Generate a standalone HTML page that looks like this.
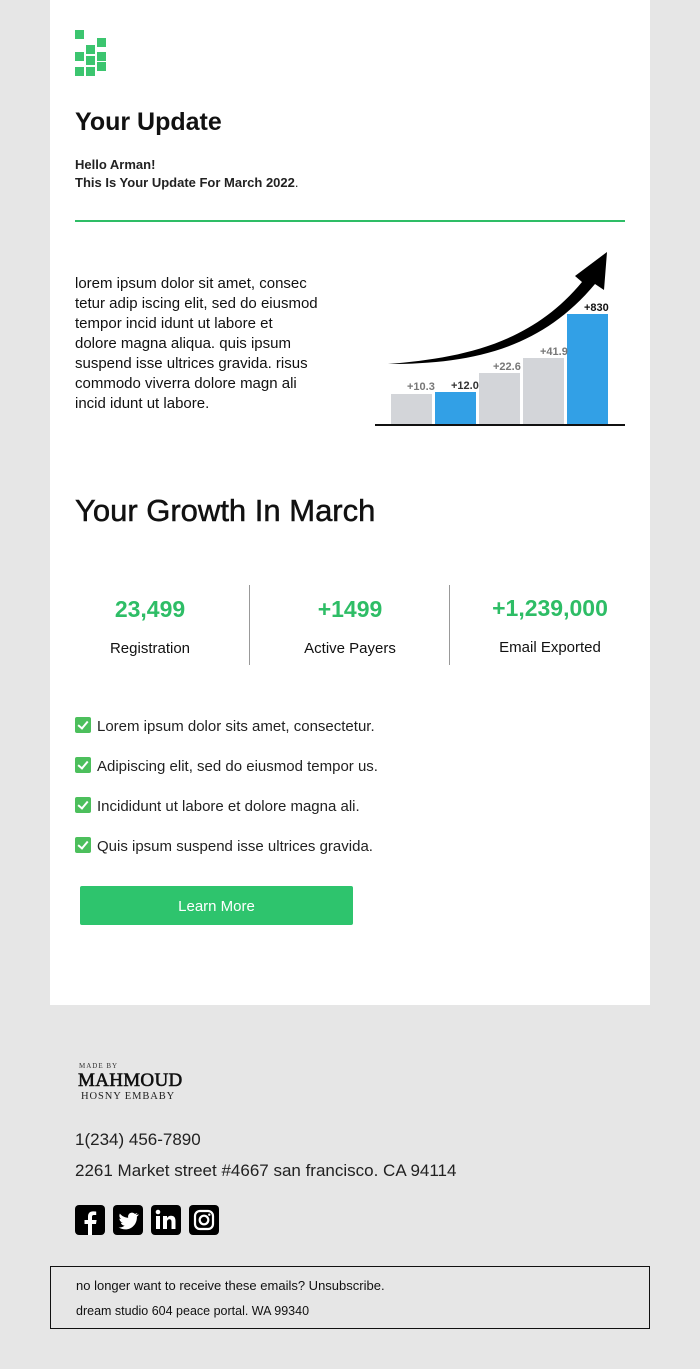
<!DOCTYPE html>
<html><head><meta charset="utf-8"><style>
*{margin:0;padding:0;box-sizing:border-box}
body{width:700px;height:1369px;background:#e6e6e6;font-family:"Liberation Sans",sans-serif;color:#111;position:relative;overflow:hidden}
.card{position:absolute;left:50px;top:0;width:600px;height:1005px;background:#fff}
.a{position:absolute;white-space:nowrap}
.sq{position:absolute;width:9px;height:9px;background:#3cc56f}
.chk{display:inline-block;width:16px;height:16px;background:#4cbf5c;border-radius:2px;vertical-align:-2px;margin-right:6px;position:relative}
.chk:after{content:"";position:absolute;left:5px;top:2px;width:4px;height:8px;border:solid #fff;border-width:0 2.5px 2.5px 0;transform:rotate(40deg)}
.li{font-size:15px;color:#222}
.num{font-size:23px;font-weight:bold;color:#2ebd66;text-align:center;width:200px}
.lab{font-size:15px;text-align:center;width:200px}
.soc{position:absolute;top:1205px;width:30px;height:30px;background:#000;border-radius:4px}
</style></head><body>
<div class="card"></div>
<div class="sq" style="left:75px;top:30px"></div>
<div class="sq" style="left:97px;top:38px"></div>
<div class="sq" style="left:86px;top:45px"></div>
<div class="sq" style="left:75px;top:52px"></div>
<div class="sq" style="left:97px;top:52px"></div>
<div class="sq" style="left:86px;top:56px"></div>
<div class="sq" style="left:97px;top:62px"></div>
<div class="sq" style="left:75px;top:67px"></div>
<div class="sq" style="left:86px;top:67px"></div>

<div class="a" style="left:75px;top:108px;font-size:25px;font-weight:bold;color:#111">Your Update</div>
<div class="a" style="left:75px;top:156px;font-size:13px;font-weight:bold;line-height:18px;color:#222">Hello Arman!<br>This Is Your Update For March 2022<span style="font-weight:normal">.</span></div>
<div class="a" style="left:75px;top:220px;width:550px;height:2px;background:#2ebd66"></div>

<div class="a" style="left:75px;top:274px;font-size:15px;line-height:20px;color:#111">lorem ipsum dolor sit amet, consec<br>tetur adip iscing elit, sed do eiusmod<br>tempor incid idunt ut labore et<br>dolore magna aliqua. quis ipsum<br>suspend isse ultrices gravida. risus<br>commodo viverra dolore magn ali<br>incid idunt ut labore.</div>

<svg class="a" style="left:370px;top:240px" width="260" height="195" viewBox="0 0 260 195">
<rect x="21" y="154" width="41" height="31" fill="#d3d5d9"/>
<rect x="65" y="152" width="41" height="33" fill="#32a0e6"/>
<rect x="109" y="133" width="41" height="52" fill="#d3d5d9"/>
<rect x="153" y="118" width="41" height="67" fill="#d3d5d9"/>
<rect x="197" y="74" width="41" height="111" fill="#32a0e6"/>
<rect x="5" y="184" width="250" height="2" fill="#111"/>
<g font-family="Liberation Sans Narrow,Liberation Sans,sans-serif" font-weight="bold" font-size="11">
<text x="37" y="150" fill="#777">+10.3</text>
<text x="81" y="149" fill="#333">+12.0</text>
<text x="123" y="130" fill="#777">+22.6</text>
<text x="170" y="115" fill="#777">+41.9</text>
<text x="214" y="71" fill="#111">+830</text></g>
<path d="M18 124 C90 118 160 105 212 42 L205 36 L237 12 L234 50 L225 44 C170 110 100 124 18 124 Z" fill="#000"/>
</svg>

<div class="a" style="left:75px;top:493px;font-size:31px;color:#111;-webkit-text-stroke:0.5px #111">Your Growth In March</div>

<div class="a num" style="left:50px;top:596px">23,499</div>
<div class="a lab" style="left:50px;top:640px">Registration</div>
<div class="a" style="left:249px;top:585px;width:1px;height:80px;background:#999"></div>
<div class="a num" style="left:250px;top:596px">+1499</div>
<div class="a lab" style="left:250px;top:640px">Active Payers</div>
<div class="a" style="left:449px;top:585px;width:1px;height:80px;background:#999"></div>
<div class="a num" style="left:450px;top:595px">+1,239,000</div>
<div class="a lab" style="left:450px;top:639px">Email Exported</div>

<div class="a li" style="left:75px;top:717px"><span class="chk"></span>Lorem ipsum dolor sits amet, consectetur.</div>
<div class="a li" style="left:75px;top:757px"><span class="chk"></span>Adipiscing elit, sed do eiusmod tempor us.</div>
<div class="a li" style="left:75px;top:797px"><span class="chk"></span>Incididunt ut labore et dolore magna ali.</div>
<div class="a li" style="left:75px;top:837px"><span class="chk"></span>Quis ipsum suspend isse ultrices gravida.</div>

<div class="a" style="left:80px;top:886px;width:273px;height:39px;background:#2ec46d;border-radius:2px;color:#fff;font-size:15px;text-align:center;line-height:41px">Learn More</div>

<div class="a" style="left:79px;top:1062px;font-family:'Liberation Serif',serif;font-size:7px;letter-spacing:1px;color:#333">MADE BY</div>
<div class="a" style="left:78px;top:1070px;font-family:'Liberation Serif',serif;font-size:19px;color:#111;-webkit-text-stroke:0.6px #111;letter-spacing:0.3px">MAHMOUD</div>
<div class="a" style="left:81px;top:1091px;font-family:'Liberation Serif',serif;font-size:10.5px;letter-spacing:.9px;color:#222">HOSNY EMBABY</div>

<div class="a" style="left:75px;top:1130px;font-size:17px;color:#222">1(234) 456-7890</div>
<div class="a" style="left:75px;top:1161px;font-size:17px;color:#222">2261 Market street #4667 san francisco. CA 94114</div>

<div class="soc" style="left:75px"><svg width="30" height="30"><path d="M17 30V19h4l.6-4H17v-3c0-1.2.4-2 2-2h2.2V6.6c-.4 0-1.7-.2-3.2-.2-3.2 0-5 1.9-5 5.3V15H9.5v4H13v11z" fill="#fff"/></svg></div>
<div class="soc" style="left:113px"><svg width="30" height="30"><path d="M25 9.5c-.7.3-1.5.5-2.3.6.8-.5 1.4-1.3 1.7-2.2-.8.5-1.6.8-2.5 1-1.6-1.7-4.4-1.7-5.9.1-.9 1-1.1 2.5-.8 3.8-3.3-.2-6.3-1.7-8.3-4.2-1.1 1.9-.5 4.2 1.3 5.4-.6 0-1.3-.2-1.800-.5 0 2 1.4 3.7 3.3 4.1-.6.2-1.2.2-1.9.1.5 1.7 2.1 2.8 3.9 2.9-1.7 1.4-4 2-6.1 1.8 8.7 5.4 18.8-.8 18.3-10.9.8-.5 1.4-1.2 1.9-2z" fill="#fff"/></svg></div>
<div class="soc" style="left:151px"><svg width="30" height="30"><rect x="5" y="11" width="4" height="13" fill="#fff"/><circle cx="7" cy="7" r="2.3" fill="#fff"/><path d="M12 11h4v2c.8-1.4 2.2-2.3 4-2.3 3.2 0 4.5 2 4.5 5.3V24h-4v-7c0-1.7-.5-2.8-2-2.8s-2.5 1.1-2.5 2.8v7h-4z" fill="#fff"/></svg></div>
<div class="soc" style="left:189px"><svg width="30" height="30"><rect x="6" y="6" width="18" height="18" rx="5" fill="none" stroke="#fff" stroke-width="2.2"/><circle cx="15" cy="15" r="4.3" fill="none" stroke="#fff" stroke-width="2.2"/><circle cx="20.3" cy="9.7" r="1.2" fill="#fff"/></svg></div>

<div class="a" style="left:50px;top:1266px;width:600px;height:63px;border:1px solid #111"></div>
<div class="a" style="left:76px;top:1278px;font-size:13px;color:#111">no longer want to receive these emails? Unsubscribe.</div>
<div class="a" style="left:76px;top:1304px;font-size:12.5px;color:#111">dream studio 604 peace portal. WA 99340</div>
</body></html>
